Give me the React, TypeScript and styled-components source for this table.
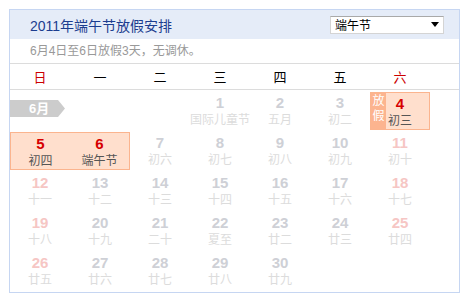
import React from 'react'
import styled, { createGlobalStyle } from 'styled-components'

const GlobalStyle = createGlobalStyle`
  body {
    margin: 0;
    background: #fff;
    font-family: "Liberation Sans", "Noto Sans CJK SC", sans-serif;
  }
`

const Box = styled.div`
  box-sizing: border-box;
  margin: 9px 0 0 9px;
  width: 451px;
  height: 284px;
  border: 1px solid #c6d6f2;
`

const Header = styled.div`
  height: 29px;
  display: flex;
  align-items: center;
  justify-content: space-between;
  padding: 0 15px 0 20px;
  background: #e5ecf8;
`

const Title = styled.h1`
  margin: 0;
  font-size: 14px;
  font-weight: normal;
  color: #1c3d8f;
`

const Select = styled.div`
  box-sizing: border-box;
  width: 114px;
  height: 18px;
  display: flex;
  align-items: center;
  justify-content: space-between;
  padding: 0 4px 0 4px;
  background: #fff;
  border: 1px solid #d4d4d4;
  border-top-color: #a9a9a9;
  font-size: 12px;
  color: #000;
`

const Note = styled.div`
  height: 24px;
  line-height: 24px;
  padding-left: 20px;
  font-size: 12px;
  color: #999;
  border-bottom: 1px solid #dcdcdc;
`

const Weekdays = styled.div`
  display: grid;
  grid-template-columns: repeat(7, 60px);
  height: 25px;
  align-items: center;
  border-bottom: 1px solid #dcdcdc;
`

const Weekday = styled.div<{ $weekend?: boolean }>`
  text-align: center;
  font-size: 13px;
  color: ${({ $weekend }) => ($weekend ? '#cc0000' : '#000')};
`

const Grid = styled.div`
  display: grid;
  grid-template-columns: repeat(7, 60px);
  grid-auto-rows: 38px;
  row-gap: 2px;
  padding: 2px 0;
`

const MonthTag = styled.div`
  grid-row: 1;
  grid-column: 1 / span 2;
  align-self: start;
  margin-top: 8px;
  width: 55px;
  height: 17px;
  line-height: 17px;
  padding-left: 19px;
  box-sizing: border-box;
  background: #cccccc;
  clip-path: polygon(0 0, 48px 0, 55px 50%, 48px 100%, 0 100%);
  color: #fff;
  font-size: 13px;
  font-weight: bold;
`

const Highlight = styled.div<{ $span: number; $start?: number }>`
  position: relative;
  box-sizing: border-box;
  grid-column: ${({ $start, $span }) => ($start ? `${$start} / span ${$span}` : `span ${$span}`)};
  display: flex;
  background: #ffdfcd;
  border: 1px solid #fbb48e;
`

const HolidayBadge = styled.div`
  position: absolute;
  left: 0;
  top: 0;
  bottom: 0;
  width: 15px;
  padding-top: 1px;
  box-sizing: border-box;
  background: #fcb48f;
  color: #fff;
  font-size: 12px;
  line-height: 15px;
  text-align: center;
`

const Day = styled.div<{ $start?: number }>`
  flex: 1;
  display: flex;
  flex-direction: column;
  align-items: center;
  padding-top: 1px;
  ${({ $start }) => ($start ? `grid-column-start: ${$start};` : '')}
`

const Num = styled.div<{ $tone: 'active' | 'muted' | 'weekend' }>`
  font-size: 15px;
  font-weight: bold;
  line-height: 19px;
  color: ${({ $tone }) =>
    $tone === 'active' ? '#d60000' : $tone === 'weekend' ? '#f6c6c4' : '#ced0d6'};
`

const Lunar = styled.div<{ $active?: boolean }>`
  font-size: 12px;
  line-height: 16px;
  white-space: nowrap;
  color: ${({ $active }) => ($active ? '#555' : '#dcdcdc')};
`

const lunar = [
  '国际儿童节', '五月', '初二', '初三', '初四', '端午节', '初六', '初七', '初八', '初九',
  '初十', '十一', '十二', '十三', '十四', '十五', '十六', '十七', '十八', '十九',
  '二十', '夏至', '廿二', '廿三', '廿四', '廿五', '廿六', '廿七', '廿八', '廿九',
]

const weekdays = ['日', '一', '二', '三', '四', '五', '六']

const FIRST = 3

const renderDay = (d: number, active: boolean, start?: number) => {
  const col = (d - 1 + FIRST) % 7
  const tone = active ? 'active' : col === 0 || col === 6 ? 'weekend' : 'muted'
  return (
    <Day key={d} $start={start}>
      <Num $tone={tone}>{d}</Num>
      <Lunar $active={active}>{lunar[d - 1]}</Lunar>
    </Day>
  )
}

const App = () => {
  const rest = []
  for (let d = 7; d <= 30; d++) rest.push(renderDay(d, false))

  return (
    <>
      <GlobalStyle />
      <Box>
        <Header>
          <Title>2011年端午节放假安排</Title>
          <Select>
            <span>端午节</span>
            <svg width="8" height="5" viewBox="0 0 8 5">
              <path d="M0 0h8L4 5z" fill="#000" />
            </svg>
          </Select>
        </Header>
        <Note>6月4日至6日放假3天，无调休。</Note>
        <Weekdays>
          {weekdays.map((w, i) => (
            <Weekday key={w} $weekend={i === 0 || i === 6}>
              {w}
            </Weekday>
          ))}
        </Weekdays>
        <Grid>
          <MonthTag>6月</MonthTag>
          {renderDay(1, false, 4)}
          {renderDay(2, false)}
          {renderDay(3, false)}
          <Highlight $span={1}>
            <HolidayBadge>放假</HolidayBadge>
            {renderDay(4, true)}
          </Highlight>
          <Highlight $span={2}>
            {renderDay(5, true)}
            {renderDay(6, true)}
          </Highlight>
          {rest}
        </Grid>
      </Box>
    </>
  )
}

export default App
